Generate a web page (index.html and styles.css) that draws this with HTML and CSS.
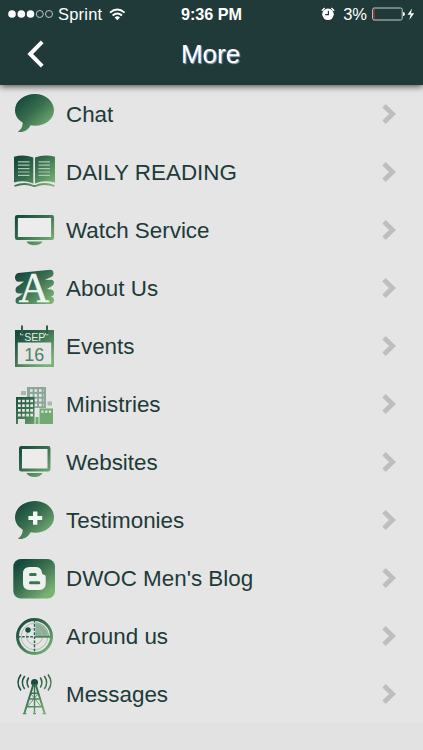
FILE: index.html
```html
<!DOCTYPE html>
<html lang="en">
<head>
    <meta charset="UTF-8">
    <meta name="viewport" content="width=device-width, initial-scale=1.0">
    <title>More</title>
    <link rel="stylesheet" href="styles.css">
</head>
<body>
    <!-- Shared gradient for the menu icons -->
    <svg class="defs" width="0" height="0">
        <defs>
            <linearGradient id="green" gradientUnits="userSpaceOnUse" x1="8" y1="5" x2="36" y2="36">
                <stop offset="0" stop-color="#174a3f"/>
                <stop offset="0.45" stop-color="#396f4f"/>
                <stop offset="1" stop-color="#79b276"/>
            </linearGradient>
        </defs>
    </svg>

    <header>
        <div class="status">
            <div class="carrier">
                <svg class="signal" width="46" height="10" viewBox="0 0 46 10">
                    <g fill="#fff"><circle cx="4" cy="5" r="3.8"/><circle cx="13.3" cy="5" r="3.8"/><circle cx="22.5" cy="5" r="3.8"/></g>
                    <g fill="none" stroke="#dfe5e4" stroke-width="0.8"><circle cx="31.8" cy="5" r="3.5"/><circle cx="41" cy="5" r="3.5"/></g>
                </svg>
                <span>Sprint</span>
                <svg class="wifi" width="17" height="13" viewBox="0 0 17 13">
                    <g fill="none" stroke="#fff" stroke-width="1.9">
                        <path d="M1 4.6Q8.3-1.8 15.6 4.6"/>
                        <path d="M3.6 7.5Q8.3 3.4 13 7.5"/>
                    </g>
                    <path d="M5.6 9.5Q8.3 7.2 11 9.5L8.3 12.2z" fill="#fff"/>
                </svg>
            </div>
            <div class="time">9:36 PM</div>
            <div class="power">
                <svg class="alarm" width="14" height="14" viewBox="0 0 14 14">
                    <circle cx="7" cy="7.3" r="5.8" fill="#fff"/>
                    <path d="M.8 3.7 3.7 1M10.3 1l2.9 2.7" stroke="#fff" stroke-width="1.4"/>
                    <path d="M7.4 3.8v3.9H4.2" fill="none" stroke="#203a39" stroke-width="1.2"/>
                </svg>
                <span>3%</span>
                <svg class="battery" width="43" height="14" viewBox="0 0 43 14">
                    <rect x=".6" y="1" width="29.6" height="12" rx="1.6" fill="none" stroke="#c5cecc" stroke-width="1"/>
                    <rect x="1.3" y="2" width="1.5" height="10" fill="#9c3434"/>
                    <path d="M31 5q2 0 2 2t-2 2z" fill="#fff"/>
                    <path d="M40 1.4 35.5 7.7h3.2L37.2 13l5-6.8H39z" fill="#fff"/>
                </svg>
            </div>
        </div>
        <div class="navbar">
            <svg class="back" width="18" height="28" viewBox="0 0 18 28">
                <path d="M15.2 1.8 3.2 14l12 12.2" fill="none" stroke="#fff" stroke-width="4"/>
            </svg>
            <h1>More</h1>
        </div>
    </header>

    <ul class="menu">
        <li>
            <svg class="icon" viewBox="0 0 42 42" fill="url(#green)">
                <path d="M22 1C11 1 2 8 2 17.3c0 5.4 3 9.600 7.800 12.400-.1 4-1.800 7.100-5 9 5 1.600 10.400-1.600 12.800-6.400 1.400.3 2.800.4 4.400.4 10.600 0 19-6.600 19-15.500S32.600 1 22 1z"/>
            </svg>
            <span>Chat</span>
            <svg class="arrow" viewBox="0 0 14 20"><path d="M2 1.8 10.5 10 2 18.2"/></svg>
        </li>
        <li>
            <svg class="icon" viewBox="0 0 42 42">
                <path d="M1 5.8Q11 3 20.3 6.6V32.500Q11 28.500 1 31.500zM22 6.600Q31 3 42 5.800V31.500Q31 28.500 22 32.500z" fill="url(#green)"/>
                <path d="M1.500 35Q12 31 20.500 35h2Q31 31 41.500 35" fill="none" stroke="url(#green)" stroke-width="1.800"/>
                <path d="M5 10.800h11.500M5 14.200h11.500M5 17.600h11.500M5 21h11.500M5 24.400h11.500M25.500 10.800H37M25.500 14.200H37M25.500 17.600H37M25.500 21H37M25.500 24.400H37" stroke="#a9c8ae" stroke-width="1.200"/>
            </svg>
            <span>DAILY READING</span>
            <svg class="arrow" viewBox="0 0 14 20"><path d="M2 1.8 10.5 10 2 18.2"/></svg>
        </li>
        <li>
            <svg class="icon" viewBox="0 0 42 42">
                <rect x="3.400" y="7.400" width="36.200" height="22.200" rx=".8" fill="#ececec" stroke="url(#green)" stroke-width="3"/>
                <path d="M13.500 32.500h16q-2 3.800-8 3.800t-8-3.800z" fill="url(#green)"/>
            </svg>
            <span>Watch Service</span>
            <svg class="arrow" viewBox="0 0 14 20"><path d="M2 1.8 10.5 10 2 18.2"/></svg>
        </li>
        <li>
            <svg class="icon" viewBox="0 0 42 42">
                <!-- brush strokes behind the letter -->
                <path d="M5 6 37 2.800q3.500 0 3.500 3.500T37 10.500l-5 2.500 6-.3q3 .3 3 3t-3 4L34 22l4 .5q3 .5 3 3.500t-3 3.500q3 .5 3 3.500 0 4-4 4H6q-3.500 0-3.500-3.200T6 29.500l4-3H6q-3.500-.3-3.500-3.500T6 18.500l5-4-6 .3q-3-.8-3-4.300T5 6z" fill="url(#green)"/>
                <text class="letter" x="21" y="34.500">A</text>
            </svg>
            <span>About Us</span>
            <svg class="arrow" viewBox="0 0 14 20"><path d="M2 1.8 10.5 10 2 18.2"/></svg>
        </li>
        <li>
            <svg class="icon" viewBox="0 0 42 42">
                <path fill-rule="evenodd" d="M2 5h39v37H2zM4.800 17.500V39.200H38.200V17.500z" fill="url(#green)"/>
                <path d="M9 .5v8M34 .5v8" stroke="#2d6149" stroke-width="2"/>
                <path d="M7.500 8v1.800h3M32.500 8v1.800h3" fill="none" stroke="#dce6dd" stroke-width=".8"/>
                <text class="month" x="21.700" y="15.600">SEP</text>
                <text class="day" x="21.300" y="35.500">16</text>
            </svg>
            <span>Events</span>
            <svg class="arrow" viewBox="0 0 14 20"><path d="M2 1.8 10.5 10 2 18.2"/></svg>
        </li>
        <li>
            <svg class="icon" viewBox="0 0 42 42">
                <path d="M14 4h19v21H14z" fill="#8da69b"/>
                <path d="M17 7.500h14M17 12.300h14M17 17.100h14M17 22h14" stroke="#e5e6e5" stroke-width="2.700" stroke-dasharray="2.600 1.900"/>
                <path d="M8 8h5v4H8zM34.500 18.500H39v4h-4.500z" fill="#a9b8ae"/>
                <path d="M3 14h18.500v27H12v-5H5v5H3z" fill="url(#green)"/>
                <path d="M5 18h15M5 22.700h15M5 27.400h15M5 32.100h15" stroke="#e5e6e5" stroke-width="2.700" stroke-dasharray="2.700 1.400"/>
                <path d="M26.500 25.500H40V41H26.500zM22.500 34h3v7h-3z" fill="#73aa70"/>
                <path d="M28.300 28.700h10.500" stroke="#e5e6e5" stroke-width="2.200" stroke-dasharray="2.300 1.500"/>
            </svg>
            <span>Ministries</span>
            <svg class="arrow" viewBox="0 0 14 20"><path d="M2 1.8 10.5 10 2 18.2"/></svg>
        </li>
        <li>
            <svg class="icon" viewBox="0 0 42 42">
                <rect x="7.500" y="6.500" width="28.500" height="22.500" rx=".8" fill="#ececec" stroke="url(#green)" stroke-width="3"/>
                <path d="M13.500 32h16q-2 4-8 4t-8-4z" fill="url(#green)"/>
            </svg>
            <span>Websites</span>
            <svg class="arrow" viewBox="0 0 14 20"><path d="M2 1.8 10.5 10 2 18.2"/></svg>
        </li>
        <li>
            <svg class="icon" viewBox="0 0 42 42" fill="url(#green)">
                <path d="M22 2C11 2 2 9 2 18.300c0 5.400 3 9.600 7.800 12.400-.1 4-1.800 7.100-5 9 5 1.600 10.400-1.600 12.800-6.400 1.400.3 2.800.4 4.400.4 10.600 0 19-6.600 19-15.500S32.600 2 22 2z"/>
                <path d="M20 12.500h4.400v4.400h4.800v4.200h-4.800v4.600H20v-4.600h-4.600v-4.200H20z" fill="#f4f8f4"/>
            </svg>
            <span>Testimonies</span>
            <svg class="arrow" viewBox="0 0 14 20"><path d="M2 1.8 10.5 10 2 18.2"/></svg>
        </li>
        <li>
            <svg class="icon" viewBox="0 0 42 42">
                <rect x=".3" y="2" width="41.700" height="39.500" rx="7.500" fill="url(#green)"/>
                <path d="M16.500 10h6q5.500 0 6.300 5 .3 2.600 1.800 2.700 2.100-.1 2.100 2.100v6.700q0 6.500-6.500 6.500h-9.700q-6.500 0-6.500-6.500v-10q0-6.500 6.500-6.500z" fill="#eef2ee"/>
                <path d="M17.500 17.500h4.700M17.500 25.700h8.300" stroke="#3c7353" stroke-width="3" stroke-linecap="round"/>
            </svg>
            <span>DWOC Men's Blog</span>
            <svg class="arrow" viewBox="0 0 14 20"><path d="M2 1.8 10.5 10 2 18.2"/></svg>
        </li>
        <li>
            <svg class="icon" viewBox="0 0 42 42">
                <path d="M22.500 21V7Q34 8.500 36.500 21z" fill="#6f9e7f" opacity=".75"/>
                <circle cx="21.500" cy="21.500" r="17" fill="none" stroke="url(#green)" stroke-width="3"/>
                <g fill="none" stroke="#a4b9ab" stroke-width=".9">
                    <circle cx="21.500" cy="21.500" r="13.300"/>
                    <circle cx="21.500" cy="21.500" r="8"/>
                </g>
                <path d="M21.500 5v33M5 21.800h16" stroke="#2b604c" stroke-width="1.400" stroke-dasharray="2.600 1.500"/>
                <path d="M21.500 21.800H37" stroke="#4b845c" stroke-width="1.800"/>
                <circle cx="15" cy="15" r="2.700" fill="#194d41"/>
            </svg>
            <span>Around us</span>
            <svg class="arrow" viewBox="0 0 14 20"><path d="M2 1.8 10.5 10 2 18.2"/></svg>
        </li>
        <li>
            <svg class="icon" viewBox="0 0 42 42">
                <circle cx="21.500" cy="9.500" r="3.500" fill="#164b40"/>
                <g fill="none" stroke="url(#green)">
                    <path d="M20.500 11 11.300 40.500M22.500 11l9.200 29.500" stroke-width="2"/>
                    <path d="M21.500 11v29.500" stroke-width="1.400"/>
                    <path d="M18 20.200h7M16.500 26h10M14 33.700h15M9.800 40.600h3.600M20 40.600h3M29.600 40.600h3.600" stroke-width="1.400"/>
                    <path d="m18 21 10 12.500M25 21 14.500 33.500" stroke-width=".8"/>
                    <path d="M15.700 4.500q-3.200 5 0 10M11.700 3q-4.700 6.500 0 13M8 1.500q-6 8 0 16" stroke-width="1.600"/>
                    <path d="M27.300 4.500q3.200 5 0 10M31.300 3q4.700 6.500 0 13M35 1.500q6 8 0 16" stroke-width="1.600"/>
                </g>
            </svg>
            <span>Messages</span>
            <svg class="arrow" viewBox="0 0 14 20"><path d="M2 1.8 10.5 10 2 18.2"/></svg>
        </li>
    </ul>
</body>
</html>
```
FILE: styles.css
```css
body {
    margin: 0;
    height: 750px;
    overflow: hidden;
    background-color: #e2e2e2;
    font-family: "Liberation Sans", Arial, sans-serif;
}

.defs {
    position: absolute; /* keeps the gradient out of the flow */
}

header {
    position: relative;
    height: 85px;
    background-color: #203a39;
    color: #ffffff;
    box-shadow: 0 1px 7px rgba(0, 0, 0, 0.75);
}

.status {
    display: grid;
    grid-template-columns: 1fr auto 1fr;
    align-items: center;
    height: 28px;
    padding: 0 8px;
    font-size: 16.5px;
}

.carrier,
.power {
    display: flex;
    align-items: center;
}

.carrier span {
    margin-left: 4px;
    letter-spacing: 0.2px;
}

.wifi {
    margin-left: 7px;
}

.time {
    padding-top: 1px;
    font-size: 16.2px;
    font-weight: bold;
}

.power {
    justify-content: flex-end;
}

.alarm {
    margin-right: 8px;
}

.battery {
    margin-left: 5px;
}

.navbar {
    display: grid;
    grid-template-columns: 1fr auto 1fr;
    align-items: center;
    height: 52px;
    padding: 0 27px;
}

h1 {
    margin: 1px 2px 0 0;
    font-size: 26px;
    font-weight: normal;
    text-shadow: 1px 1px 1px #a3a9c0;
}

.menu {
    margin: 0;
    padding: 0;
    list-style: none;
    background-color: #e5e5e5;
}

.menu li {
    display: flex;
    align-items: center;
    height: 58px;
    padding: 0 27px 0 13px;
    font-size: 22.4px;
    color: #203a39;
}

.menu span {
    flex: 1;
    margin-left: 11px;
    padding-top: 2px;
}

.icon {
    width: 42px;
    height: 42px;
    overflow: visible;
}

.arrow {
    width: 14px;
    height: 20px;
    fill: none;
    stroke: #bebebe;
    stroke-width: 4.8px;
}

/* Text inside the icons */
.letter {
    font-family: "Liberation Serif", serif;
    font-size: 42px;
    text-anchor: middle;
    fill: #f0f4f0;
    stroke: #f0f4f0;
    stroke-width: 0.5px;
}

.month {
    font-size: 10.5px;
    text-anchor: middle;
    fill: #e5eee7;
}

.day {
    font-size: 18px;
    text-anchor: middle;
    fill: #528360;
}
```
